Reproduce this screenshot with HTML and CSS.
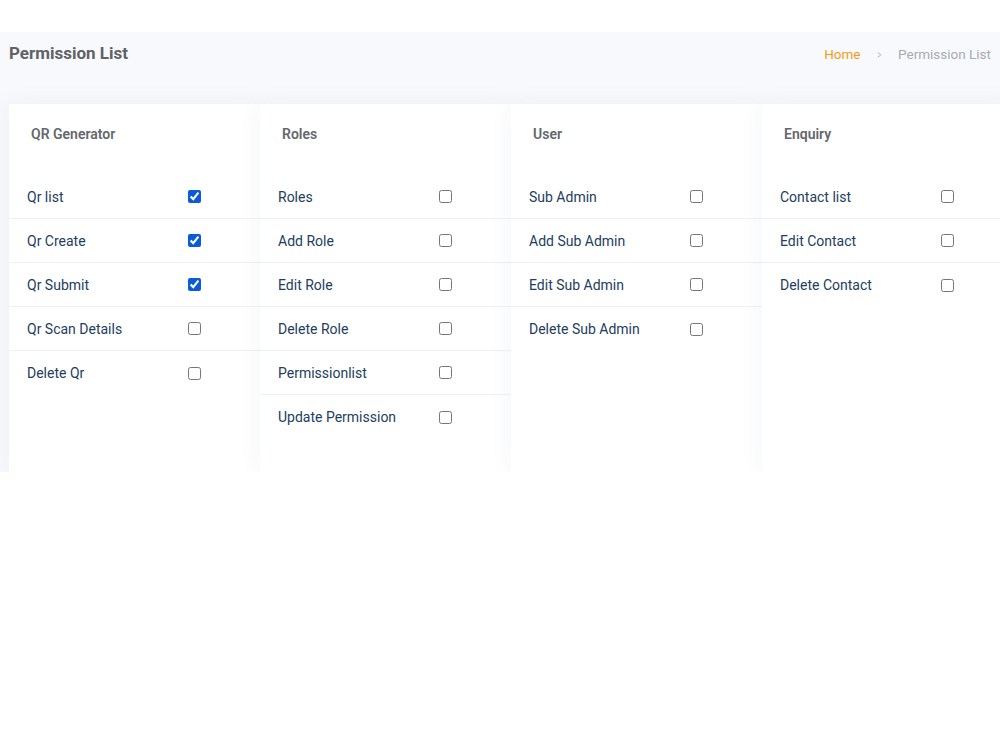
FILE: index.html
```html
<!DOCTYPE html>
<html lang="en">
<head>
    <meta charset="UTF-8">
    <meta name="viewport" content="width=device-width, initial-scale=1.0">
    <title>Permission List</title>
    <link rel="stylesheet" href="styles.css">
</head>
<body>

    <div class="top-gap"></div>

    <div class="page">
        <div class="page-head">
            <h1>Permission List</h1>
            <div class="crumbs">
                <a href="#">Home</a>
                <span class="sep">&gt;</span>
                <span class="current">Permission List</span>
            </div>
        </div>

        <div class="perm-grid">
            <div class="perm-card">
                <h2>QR Generator</h2>
                <div class="perm-row"><span>Qr list</span><input type="checkbox" checked></div>
                <div class="perm-row"><span>Qr Create</span><input type="checkbox" checked></div>
                <div class="perm-row"><span>Qr Submit</span><input type="checkbox" checked></div>
                <div class="perm-row"><span>Qr Scan Details</span><input type="checkbox"></div>
                <div class="perm-row"><span>Delete Qr</span><input type="checkbox"></div>
            </div>

            <div class="perm-card">
                <h2>Roles</h2>
                <div class="perm-row"><span>Roles</span><input type="checkbox"></div>
                <div class="perm-row"><span>Add Role</span><input type="checkbox"></div>
                <div class="perm-row"><span>Edit Role</span><input type="checkbox"></div>
                <div class="perm-row"><span>Delete Role</span><input type="checkbox"></div>
                <div class="perm-row"><span>Permissionlist</span><input type="checkbox"></div>
                <div class="perm-row"><span>Update Permission</span><input type="checkbox"></div>
            </div>

            <div class="perm-card">
                <h2>User</h2>
                <div class="perm-row"><span>Sub Admin</span><input type="checkbox"></div>
                <div class="perm-row"><span>Add Sub Admin</span><input type="checkbox"></div>
                <div class="perm-row"><span>Edit Sub Admin</span><input type="checkbox"></div>
                <div class="perm-row"><span>Delete Sub Admin</span><input type="checkbox"></div>
            </div>

            <div class="perm-card">
                <h2>Enquiry</h2>
                <div class="perm-row"><span>Contact list</span><input type="checkbox"></div>
                <div class="perm-row"><span>Edit Contact</span><input type="checkbox"></div>
                <div class="perm-row"><span>Delete Contact</span><input type="checkbox"></div>
            </div>
        </div>
    </div>

</body>
</html>
```

FILE: styles.css
```css
body {
    margin: 0;
    font-family: Roboto, Arial, sans-serif;
    background-color: #fff;
    overflow: hidden;
}
.top-gap {
    height: 32px;
}
.page {
    height: 440px;
    background-color: #f8f9fc;
    overflow: hidden;
}
.page-head {
    display: flex;
    justify-content: space-between;
    align-items: center;
    height: 42px;
    padding: 0 9px;
    margin-bottom: 30px;
}
.page-head h1 {
    margin: 0;
    font-size: 17px;
    font-weight: 700;
    color: #5f6266;
}
.crumbs {
    font-size: 13.5px;
    color: #a8abb1;
    padding-top: 2px;
}
.crumbs a {
    color: #f39c12;
    text-decoration: none;
}
.crumbs .sep {
    display: inline-block;
    margin: 0 12px;
    font-size: 13px;
    color: #bbbec4;
    transform: scaleX(0.6);
}
.perm-grid {
    display: grid;
    grid-template-columns: repeat(4, 251px);
    padding-left: 9px;
}
.perm-card {
    height: 368px;
    background-color: #fff;
    box-shadow: 0 0 24px rgba(40, 50, 90, 0.05);
}
.perm-card h2 {
    margin: 0;
    height: 71px;
    padding: 21px 0 0 22px;
    box-sizing: border-box;
    font-size: 14px;
    line-height: 18px;
    font-weight: 600;
    color: #64676c;
}
.perm-row {
    display: flex;
    align-items: center;
    height: 44px;
    padding-left: 18px;
    border-bottom: 1px solid #f0f1f4;
    box-sizing: border-box;
    font-size: 14px;
    color: #233d5e;
}
.perm-row:last-child {
    border-bottom: none;
}
.perm-row span {
    width: 161px;
}
.perm-row input {
    width: 13px;
    height: 13px;
    margin: 0;
    accent-color: #0b5bd8;
}
```
